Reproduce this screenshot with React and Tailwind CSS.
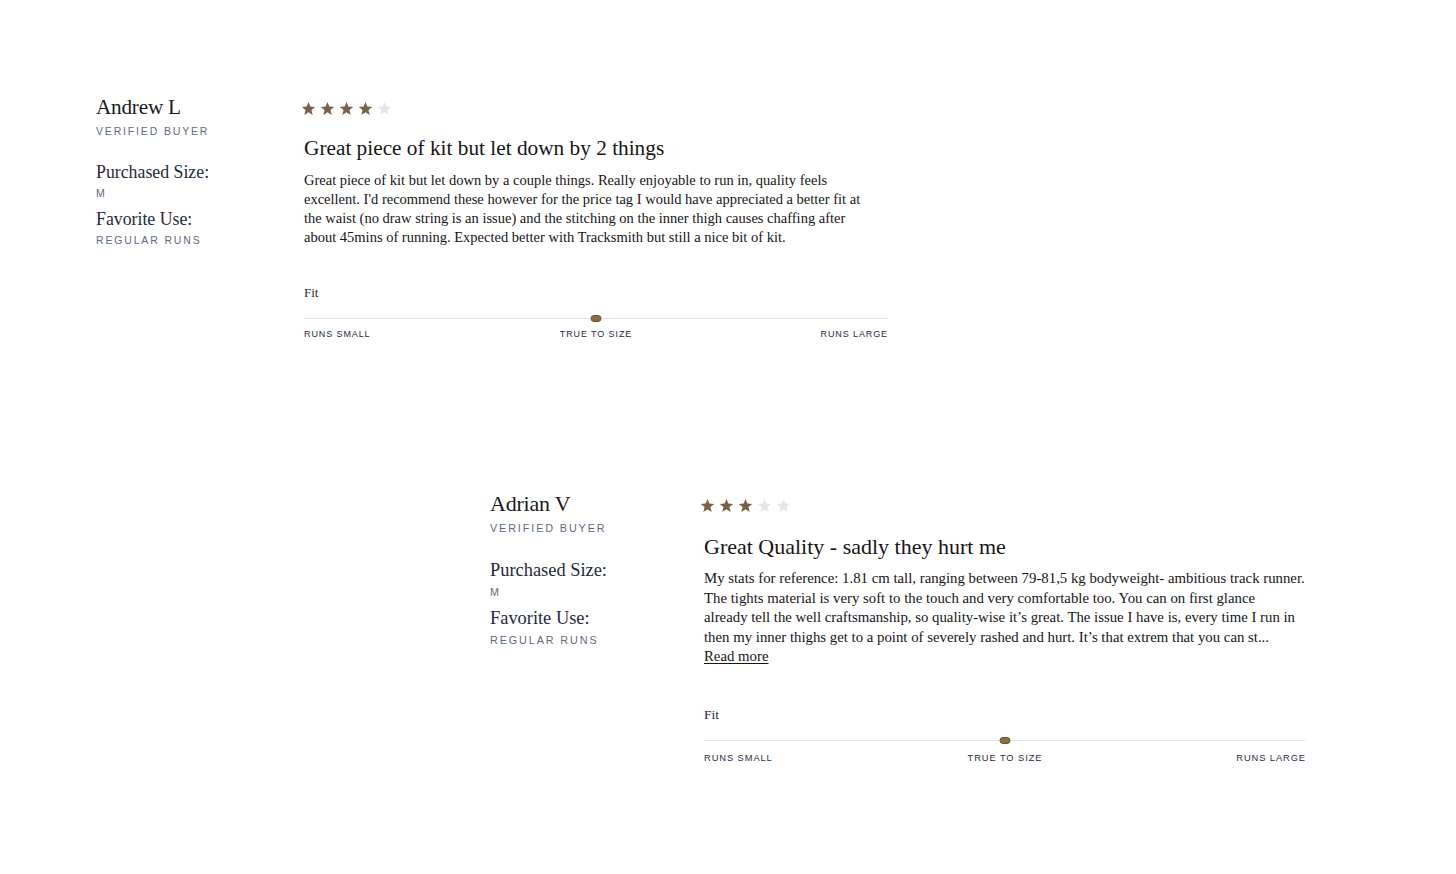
import React from "react";

const serif = { fontFamily: '"Liberation Serif", "Times New Roman", serif' };

const Star = ({ filled }) => (
  <svg viewBox="0 0 24 24" className="w-[15px] h-[15px]">
    <polygon
      points="12,1.5 14.9,8.9 22.8,9.4 16.7,14.5 18.7,22.2 12,17.9 5.3,22.2 7.3,14.5 1.2,9.4 9.1,8.9"
      fill={filled ? "#7a6141" : "#e6e6e8"}
    />
  </svg>
);

const Stars = ({ count }) => (
  <div className="flex gap-[4px] h-[16px] items-center">
    {[1, 2, 3, 4, 5].map((i) => (
      <Star key={i} filled={i <= count} />
    ))}
  </div>
);

const Label = ({ children, className = "" }) => (
  <div
    className={
      "font-['Liberation_Sans',Arial,sans-serif] leading-[14px] tracking-[0.175em] uppercase text-[#5d6b80] " +
      className
    }
  >
    {children}
  </div>
);

const FitBar = () => (
  <div className="relative h-[10px] flex items-center">
    <div className="w-full h-px bg-[#e4e4e4]"></div>
    <div className="absolute left-1/2 -translate-x-1/2 w-[11px] h-[7px] rounded-full bg-[#8a6c43] border border-[#6d5332]"></div>
  </div>
);

const FitLabels = ({ className }) => (
  <div
    className={
      "grid grid-cols-3 font-['Liberation_Sans',Arial,sans-serif] leading-[12px] tracking-[0.1em] uppercase text-[#1f2b45] " +
      className
    }
  >
    <span>Runs Small</span>
    <span className="text-center">True to Size</span>
    <span className="text-right">Runs Large</span>
  </div>
);

export default function App() {
  return (
    <div className="w-full min-h-[874px] bg-white text-[#161616]" style={serif}>
      {/* review 1 */}
      <div className="flex pt-[95px] pl-[96px]">
        <div className="w-[204px] shrink-0">
          <div className="text-[21.2px] leading-[24px] tracking-[-0.01em] text-[#1a1a1a]">Andrew L</div>
          <Label className="mt-[5px] text-[10.5px]">Verified Buyer</Label>
          <div className="mt-[23px] text-[17.8px] leading-[22px] text-[#1e2a3b]">Purchased Size:</div>
          <Label className="mt-[3px] text-[10.5px]">M</Label>
          <div className="mt-[8px] text-[17.8px] leading-[22px] text-[#1e2a3b]">Favorite Use:</div>
          <Label className="mt-[3px] text-[10.5px]">Regular Runs</Label>
        </div>
        <div className="w-[588px] shrink-0">
          <div className="mt-[5px] pl-[1px]">
            <Stars count={4} />
          </div>
          <div className="mt-[19px] pl-[4px] text-[21.3px] leading-[26px]">
            Great piece of kit but let down by 2 things
          </div>
          <p className="mt-[10px] pl-[4px] text-[14.5px] leading-[19px] whitespace-nowrap">
            Great piece of kit but let down by a couple things. Really enjoyable to run in, quality feels
            <br />
            excellent. I'd recommend these however for the price tag I would have appreciated a better fit at
            <br />
            the waist (no draw string is an issue) and the stitching on the inner thigh causes chaffing after
            <br />
            about 45mins of running. Expected better with Tracksmith but still a nice bit of kit.
          </p>
          <div className="pl-[4px]">
            <div className="mt-[37px] text-[13px] leading-[18px] text-[#1e2a3b]">Fit</div>
            <div className="mt-[11px]">
              <FitBar />
            </div>
            <FitLabels className="mt-[5px] text-[9px]" />
          </div>
        </div>
      </div>

      {/* review 2 */}
      <div className="flex mt-[152px] pl-[490px] pb-[100px]">
        <div className="w-[210px] shrink-0">
          <div className="text-[22px] leading-[24px] tracking-[-0.01em] text-[#1a1a1a]">Adrian V</div>
          <Label className="mt-[5px] text-[10.8px]">Verified Buyer</Label>
          <div className="mt-[24px] text-[18.4px] leading-[22px] text-[#1e2a3b]">Purchased Size:</div>
          <Label className="mt-[4px] text-[10.8px]">M</Label>
          <div className="mt-[8px] text-[18.4px] leading-[22px] text-[#1e2a3b]">Favorite Use:</div>
          <Label className="mt-[4px] text-[10.8px]">Regular Runs</Label>
        </div>
        <div className="w-[606px] shrink-0">
          <div className="mt-[5px]">
            <Stars count={3} />
          </div>
          <div className="mt-[21px] pl-[4px] text-[22px] leading-[26px]">
            Great Quality - sadly they hurt me
          </div>
          <p className="mt-[9px] pl-[4px] text-[14.8px] leading-[19.5px] whitespace-nowrap">
            My stats for reference: 1.81 cm tall, ranging between 79-81,5 kg bodyweight- ambitious track runner.
            <br />
            The tights material is very soft to the touch and very comfortable too. You can on first glance
            <br />
            already tell the well craftsmanship, so quality-wise it’s great. The issue I have is, every time I run in
            <br />
            then my inner thighs get to a point of severely rashed and hurt. It’s that extrem that you can st...
            <br />
            <a href="#" className="underline underline-offset-2 text-[#161616]">Read more</a>
          </p>
          <div className="pl-[4px]">
            <div className="mt-[39px] text-[13.5px] leading-[18px] text-[#1e2a3b]">Fit</div>
            <div className="mt-[12px]">
              <FitBar />
            </div>
            <FitLabels className="mt-[6px] text-[9.3px]" />
          </div>
        </div>
      </div>
    </div>
  );
}
